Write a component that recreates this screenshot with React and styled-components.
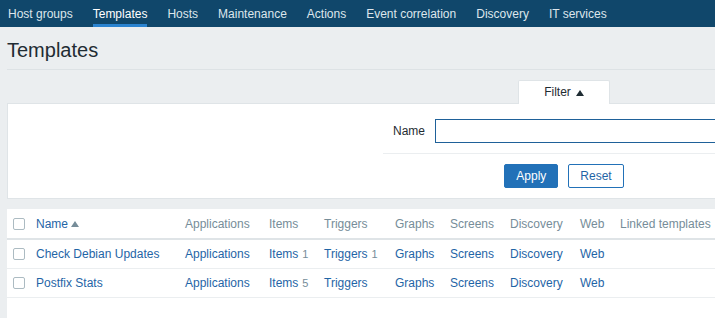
import React from "react";
import styled, { createGlobalStyle } from "styled-components";

const Global = createGlobalStyle`
  html, body { margin: 0; padding: 0; background: #ebeef0; overflow: hidden; }
  body { font-family: "Liberation Sans", Arial, sans-serif; font-size: 12px; color: #1f2c33; }
`;

const Viewport = styled.div`
  width: 100vw;
  height: 100vh;
  overflow: hidden;
  background: #ebeef0;
`;

const Page = styled.div`
  width: 1128px;
`;

const Nav = styled.nav`
  display: flex;
  align-items: stretch;
  gap: 20px;
  height: 27px;
  padding-left: 8px;
  background: #10476b;
`;

const NavItem = styled.a`
  display: flex;
  align-items: center;
  padding-top: 1px;
  box-sizing: border-box;
  color: ${(p) => (p.$active ? "#ffffff" : "#dde6ec")};
  font-size: 12px;
  text-decoration: none;
  border-bottom: 3px solid ${(p) => (p.$active ? "#2a83d0" : "transparent")};
  border-top: 3px solid transparent;
`;

const Content = styled.main`
  padding: 0 7px;
`;

const Header = styled.header`
  padding: 12px 0 7px;
  border-bottom: 1px solid #dde2e5;
`;

const Title = styled.h1`
  margin: 0;
  font-size: 20px;
  line-height: 23px;
  font-weight: normal;
  color: #1f2c33;
`;

const FilterTabs = styled.div`
  display: flex;
  justify-content: center;
  margin-top: 10px;
`;

const FilterTab = styled.div`
  width: 92px;
  height: 24px;
  box-sizing: border-box;
  margin-bottom: -1px;
  padding-bottom: 1px;
  position: relative;
  background: #fff;
  border: 1px solid #dfe4e7;
  border-bottom: none;
  border-radius: 2px 2px 0 0;
  display: flex;
  align-items: center;
  justify-content: center;
  gap: 5px;
  color: #1f2c33;
  font-size: 12px;
`;

const Arrow = styled.span`
  display: inline-block;
  width: 0;
  height: 0;
  border-left: 4px solid transparent;
  border-right: 4px solid transparent;
  border-bottom: 6px solid ${(p) => p.$color || "#1f2c33"};
  margin-top: 1px;
`;

const FilterBox = styled.section`
  background: #fff;
  border: 1px solid #dfe4e7;
  padding: 15px 0 10px;
`;

const FilterForm = styled.div`
  width: 362px;
  margin: 0 auto;
`;

const FormRow = styled.div`
  display: flex;
  align-items: center;
  padding-bottom: 10px;
  border-bottom: 1px solid #ebeef0;
`;

const Label = styled.label`
  width: 42px;
  margin-right: 10px;
  text-align: right;
  color: #1f2c33;
`;

const TextInput = styled.input`
  width: 300px;
  height: 24px;
  box-sizing: border-box;
  border: 1px solid #1f6199;
  border-radius: 0;
  outline: none;
  padding: 0 5px;
  font-family: inherit;
  font-size: 12px;
`;

const Buttons = styled.div`
  display: flex;
  justify-content: center;
  gap: 10px;
  margin-top: 10px;
`;

const Button = styled.button`
  height: 24px;
  padding: 0 11px;
  border-radius: 2px;
  font-family: inherit;
  font-size: 12px;
  border: 1px solid #2271b8;
  background: ${(p) => (p.$primary ? "#2271b8" : "#fff")};
  color: ${(p) => (p.$primary ? "#fff" : "#1f65a6")};
  cursor: pointer;
`;

const TablePanel = styled.section`
  margin-top: 10px;
  background: #fff;
  padding-bottom: 40px;
`;

const cols = "29px 149px 84px 55px 71px 55px 60px 70px 40px 1fr";

const HeadRow = styled.div`
  display: grid;
  grid-template-columns: ${cols};
  align-items: center;
  height: 31px;
  box-sizing: border-box;
  border-bottom: 2px solid #dfe4e7;
  color: #768d99;
`;

const Row = styled.div`
  display: grid;
  grid-template-columns: ${cols};
  align-items: center;
  height: 29px;
  box-sizing: border-box;
  border-bottom: 1px solid #ebeef0;
`;

const CheckCell = styled.div`
  padding-left: 6px;
  display: flex;
  align-items: center;
`;

const Checkbox = styled.span`
  display: inline-block;
  width: 12px;
  height: 12px;
  box-sizing: border-box;
  border: 1px solid #acbbc2;
  border-radius: 2px;
  background: #fff;
`;

const Cell = styled.div`
  white-space: nowrap;
`;

const Link = styled.a`
  color: #1f65a6;
  text-decoration: none;
  cursor: pointer;
`;

const Count = styled.span`
  color: #768d99;
  font-size: 11px;
  margin-left: 4px;
`;

const SortLink = styled.span`
  display: inline-flex;
  align-items: center;
  gap: 3px;
`;

const navItems = [
  "Host groups",
  "Templates",
  "Hosts",
  "Maintenance",
  "Actions",
  "Event correlation",
  "Discovery",
  "IT services",
];

const rows = [
  { name: "Check Debian Updates", items: 1, triggers: 1 },
  { name: "Postfix Stats", items: 5, triggers: null },
];

export default function App() {
  return (
    <Viewport>
      <Global />
      <Page>
        <Nav>
          {navItems.map((n) => (
            <NavItem key={n} $active={n === "Templates"}>
              {n}
            </NavItem>
          ))}
        </Nav>
        <Content>
          <Header>
            <Title>Templates</Title>
          </Header>
          <FilterTabs>
            <FilterTab>
              Filter <Arrow />
            </FilterTab>
          </FilterTabs>
          <FilterBox>
            <FilterForm>
              <FormRow>
                <Label>Name</Label>
                <TextInput type="text" />
              </FormRow>
              <Buttons>
                <Button $primary>Apply</Button>
                <Button>Reset</Button>
              </Buttons>
            </FilterForm>
          </FilterBox>
          <TablePanel>
            <HeadRow>
              <CheckCell>
                <Checkbox />
              </CheckCell>
              <Cell>
                <SortLink>
                  <Link>Name</Link>
                  <Arrow $color="#768d99" />
                </SortLink>
              </Cell>
              <Cell>Applications</Cell>
              <Cell>Items</Cell>
              <Cell>Triggers</Cell>
              <Cell>Graphs</Cell>
              <Cell>Screens</Cell>
              <Cell>Discovery</Cell>
              <Cell>Web</Cell>
              <Cell>Linked templates</Cell>
            </HeadRow>
            {rows.map((r) => (
              <Row key={r.name}>
                <CheckCell>
                  <Checkbox />
                </CheckCell>
                <Cell>
                  <Link>{r.name}</Link>
                </Cell>
                <Cell>
                  <Link>Applications</Link>
                </Cell>
                <Cell>
                  <Link>Items</Link>
                  {r.items != null && <Count>{r.items}</Count>}
                </Cell>
                <Cell>
                  <Link>Triggers</Link>
                  {r.triggers != null && <Count>{r.triggers}</Count>}
                </Cell>
                <Cell>
                  <Link>Graphs</Link>
                </Cell>
                <Cell>
                  <Link>Screens</Link>
                </Cell>
                <Cell>
                  <Link>Discovery</Link>
                </Cell>
                <Cell>
                  <Link>Web</Link>
                </Cell>
                <Cell />
              </Row>
            ))}
          </TablePanel>
        </Content>
      </Page>
    </Viewport>
  );
}
